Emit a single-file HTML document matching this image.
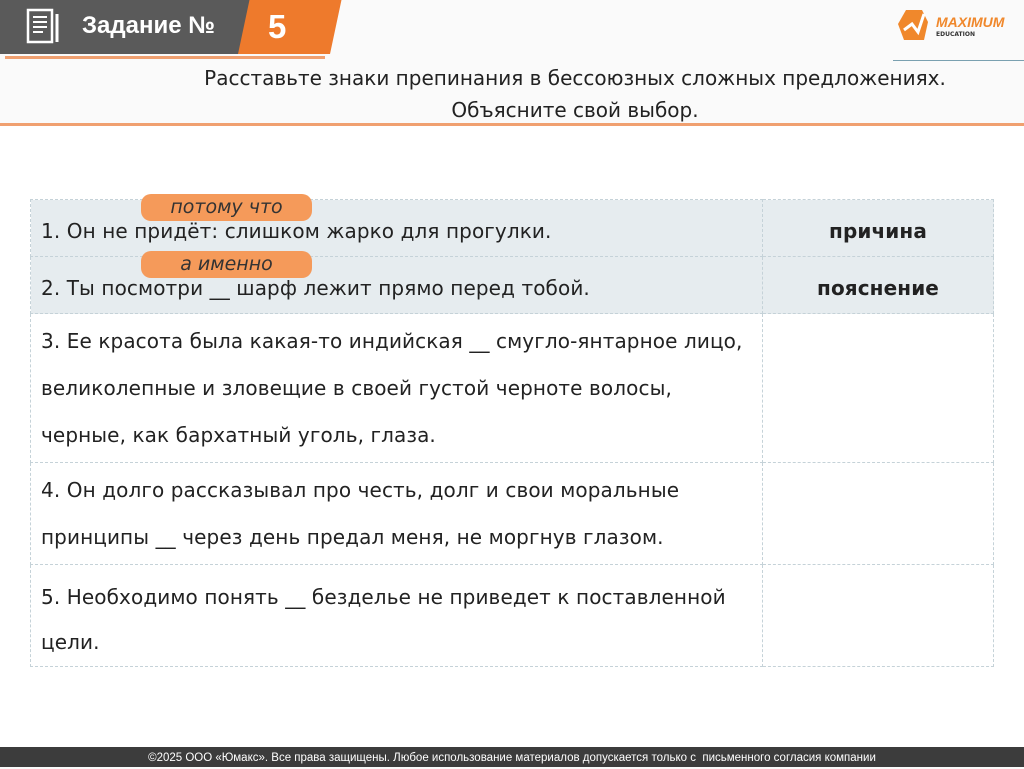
<!DOCTYPE html>
<html><head><meta charset="utf-8"><style>
body{margin:0;width:1024px;height:767px;position:relative;overflow:hidden;background:#fafafa;font-family:"DejaVu Sans","Liberation Sans",sans-serif;}
.abs{position:absolute}
.t{font-size:20px;color:#222;}
td{border:1px dashed #c5d2d8;padding:0 10px;font-size:20px;color:#222;vertical-align:middle;white-space:nowrap;letter-spacing:0.1px}
.pill{position:absolute;background:#f59a5a;border-radius:10px;font-style:italic;font-size:19px;color:#333;text-align:center;height:27px;line-height:27px}
</style></head><body>
<div class="abs" style="left:0;top:0;width:250px;height:54px;background:#5a5a5a"></div>
<div class="abs" style="left:238px;top:0;width:92px;height:54px;background:#ee7a2c;transform:skewX(-12deg);transform-origin:0 100%"></div>
<div class="abs" style="left:5px;top:56px;width:320px;height:3px;background:#f0a070"></div>
<svg class="abs" style="left:26px;top:8px" width="36" height="38" viewBox="0 0 36 38"><rect x="2" y="2" width="24" height="32" fill="none" stroke="#fff" stroke-width="2.5"/><path d="M7 9h14M7 14h14M7 19h14M7 24h10" stroke="#fff" stroke-width="2"/><path d="M31 6v28" stroke="#fff" stroke-width="3"/></svg>
<div class="abs" style="left:82px;top:12px;font-size:24px;font-weight:bold;color:#fff;font-family:'Liberation Sans',sans-serif">Задание №</div>
<div class="abs" style="left:268px;top:8px;font-size:33px;font-weight:bold;color:#fff;font-family:'Liberation Sans',sans-serif">5</div>
<svg class="abs" style="left:898px;top:8px" width="30" height="34" viewBox="0 0 30 34"><path d="M8 2h16l6 12-4 18H6L0 16z" fill="#f0882c"/><path d="M6 22l8-6 6 8 6-18" stroke="#fff" stroke-width="3" fill="none"/></svg>
<div class="abs" style="left:936px;top:14px;font-size:14px;font-weight:bold;font-style:italic;color:#f0882c;font-family:'Liberation Sans',sans-serif">MAXIMUM</div>
<div class="abs" style="left:936px;top:31px;font-size:6px;font-weight:bold;color:#333">EDUCATION</div>
<div class="abs" style="left:893px;top:60px;width:131px;height:1px;background:#7aa0b0"></div>
<div class="abs t" style="left:0;width:1150px;top:62px;text-align:center;line-height:32px;white-space:nowrap">Расставьте знаки препинания в бессоюзных сложных предложениях.<br>Объясните свой выбор.</div>
<div class="abs" style="left:0;top:123px;width:1024px;height:3px;background:#f0a070"></div>
<div class="abs" style="left:0;top:126px;width:1024px;height:621px;background:#fff"></div>
<table class="abs" style="left:30px;top:199px;width:964px;border-collapse:collapse;table-layout:fixed">
<tr style="height:57px;background:#e6ecef"><td style="width:711px;padding-top:6px">1. Он не придёт: слишком жарко для прогулки.</td><td style="text-align:center;font-weight:bold;padding-top:6px">причина</td></tr>
<tr style="height:57px;background:#e6ecef"><td style="padding-top:6px">2. Ты посмотри __ шарф лежит прямо перед тобой.</td><td style="text-align:center;font-weight:bold;padding-top:6px">пояснение</td></tr>
<tr style="height:149px"><td style="line-height:47px">3. Ее красота была какая-то индийская __ смугло-янтарное лицо,<br>великолепные и зловещие в своей густой черноте волосы,<br>черные, как бархатный уголь, глаза.</td><td></td></tr>
<tr style="height:102px"><td style="line-height:47px">4. Он долго рассказывал про честь, долг и свои моральные<br>принципы __ через день предал меня, не моргнув глазом.</td><td></td></tr>
<tr style="height:102px"><td style="line-height:45px;padding-top:8px">5. Необходимо понять __ безделье не приведет к поставленной<br>цели.</td><td></td></tr>
</table>
<div class="pill" style="left:141px;top:194px;width:171px">потому что</div>
<div class="pill" style="left:141px;top:251px;width:171px">а именно</div>
<div class="abs" style="left:0;top:747px;width:1024px;height:20px;background:#3c3c3c;color:#fff;font-size:11.5px;text-align:center;line-height:22px;font-family:'Liberation Sans',sans-serif;white-space:nowrap">©2025 ООО «Юмакс». Все права защищены. Любое использование материалов допускается только с&nbsp; письменного согласия компании</div>
</body></html>
